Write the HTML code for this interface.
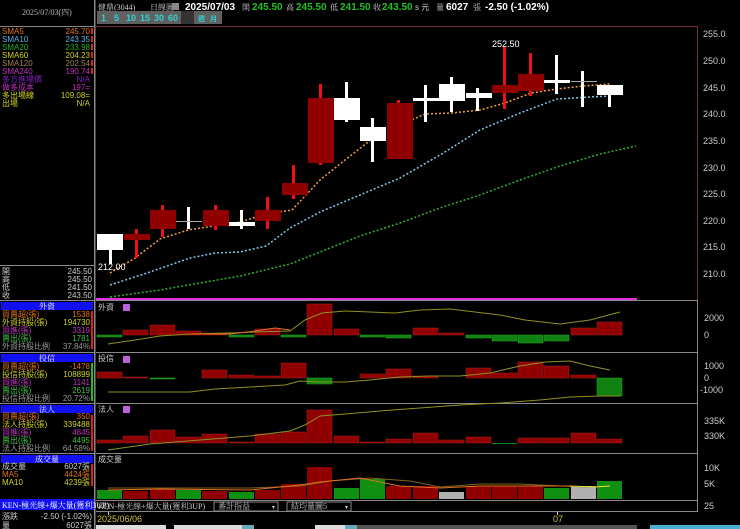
<!DOCTYPE html>
<html><head><meta charset="utf-8"><style>
html,body{margin:0;padding:0;background:#000;width:740px;height:529px;overflow:hidden}
svg{display:block}
text{font-family:"Liberation Sans","Noto Sans CJK TC",sans-serif}
.c{font-family:"Liberation Serif","Noto Serif CJK SC",serif;font-size:8px}
</style></head><body>
<svg width="740" height="529" viewBox="0 0 740 529" xmlns="http://www.w3.org/2000/svg">
<!-- left panel -->
<rect x="0" y="0" width="94" height="529" fill="#000"/>
<line x1="94.5" y1="0" x2="94.5" y2="529" stroke="#888"/>
<line x1="95.5" y1="0" x2="95.5" y2="529" stroke="#444"/>
<text x="22" y="15" class="c" fill="#bbb">2025/07/03(四)</text>
<line x1="0" y1="26.5" x2="94" y2="26.5" stroke="#888"/>
<g class="c">
<text x="2" y="34" fill="#e07020">SMA5</text><text x="90" y="34" fill="#e07020" text-anchor="end">245.70</text>
<text x="2" y="42" fill="#5ab0e0">SMA10</text><text x="90" y="42" fill="#5ab0e0" text-anchor="end">243.35</text>
<text x="2" y="50" fill="#20b020">SMA20</text><text x="90" y="50" fill="#20b020" text-anchor="end">233.98</text>
<text x="2" y="58" fill="#d0d020">SMA60</text><text x="90" y="58" fill="#d0d020" text-anchor="end">204.23</text>
<text x="2" y="66" fill="#a08050">SMA120</text><text x="90" y="66" fill="#a08050" text-anchor="end">202.54</text>
<text x="2" y="74" fill="#c030c0">SMA240</text><text x="90" y="74" fill="#c030c0" text-anchor="end">190.74</text>
<text x="2" y="82" fill="#8020c0">多方進場價</text><text x="90" y="82" fill="#8020c0" text-anchor="end">N/A</text>
<text x="2" y="90" fill="#c030c0">做多成本</text><text x="90" y="90" fill="#c030c0" text-anchor="end">197=</text>
<text x="2" y="98" fill="#d0d020">多出場線</text><text x="90" y="98" fill="#d0d020" text-anchor="end">109.08=</text>
<text x="2" y="106" fill="#d0d020">出場</text><text x="90" y="106" fill="#d0d020" text-anchor="end">N/A</text>
</g>
<g fill="#e02020"><rect x="91" y="28" width="2" height="6"/><rect x="91" y="36" width="2" height="6"/><rect x="91" y="44" width="2" height="6"/><rect x="91" y="52" width="2" height="6"/><rect x="91" y="60" width="2" height="6"/><rect x="91" y="68" width="2" height="6"/></g>
<line x1="0" y1="265.5" x2="94" y2="265.5" stroke="#888"/>
<g class="c" fill="#ccc">
<text x="2" y="274">開</text><text x="92" y="274" text-anchor="end">245.50</text>
<text x="2" y="282">高</text><text x="92" y="282" text-anchor="end">245.50</text>
<text x="2" y="290">低</text><text x="92" y="290" text-anchor="end">241.50</text>
<text x="2" y="298">收</text><text x="92" y="298" text-anchor="end">243.50</text>
</g>
<!-- section 外資 -->
<line x1="0" y1="300.5" x2="94" y2="300.5" stroke="#888"/>
<rect x="1" y="302" width="92" height="8" fill="#1010f0"/><text x="47" y="309" class="c" fill="#fff" text-anchor="middle">外資</text>
<g class="c">
<text x="2" y="317" fill="#e07020">買賣超(張)</text><text x="90" y="317" fill="#e07020" text-anchor="end">1538</text>
<text x="2" y="325" fill="#d0d020">外資持股(張)</text><text x="90" y="325" fill="#d0d020" text-anchor="end">194730</text>
<text x="2" y="333" fill="#c030c0">買進(張)</text><text x="90" y="333" fill="#c030c0" text-anchor="end">3319</text>
<text x="2" y="341" fill="#40c040">賣出(張)</text><text x="90" y="341" fill="#40c040" text-anchor="end">1781</text>
<text x="2" y="349" fill="#999">外資持股比例</text><text x="90" y="349" fill="#999" text-anchor="end">37.84%</text>
</g>
<line x1="0" y1="352.5" x2="94" y2="352.5" stroke="#888"/>
<rect x="1" y="354" width="92" height="8" fill="#1010f0"/><text x="47" y="361" class="c" fill="#fff" text-anchor="middle">投信</text>
<g class="c">
<text x="2" y="369" fill="#e07020">買賣超(張)</text><text x="90" y="369" fill="#e07020" text-anchor="end">-1478</text>
<text x="2" y="377" fill="#d0d020">投信持股(張)</text><text x="90" y="377" fill="#d0d020" text-anchor="end">108899</text>
<text x="2" y="385" fill="#c030c0">買進(張)</text><text x="90" y="385" fill="#c030c0" text-anchor="end">1141</text>
<text x="2" y="393" fill="#40c040">賣出(張)</text><text x="90" y="393" fill="#40c040" text-anchor="end">2619</text>
<text x="2" y="401" fill="#999">投信持股比例</text><text x="90" y="401" fill="#999" text-anchor="end">20.72%</text>
</g>
<line x1="0" y1="403.5" x2="94" y2="403.5" stroke="#888"/>
<rect x="1" y="405" width="92" height="8" fill="#1010f0"/><text x="47" y="412" class="c" fill="#fff" text-anchor="middle">法人</text>
<g class="c">
<text x="2" y="419" fill="#e07020">買賣超(張)</text><text x="90" y="419" fill="#e07020" text-anchor="end">350</text>
<text x="2" y="427" fill="#d0d020">法人持股(張)</text><text x="90" y="427" fill="#d0d020" text-anchor="end">339488</text>
<text x="2" y="435" fill="#c030c0">買進(張)</text><text x="90" y="435" fill="#c030c0" text-anchor="end">4845</text>
<text x="2" y="443" fill="#40c040">賣出(張)</text><text x="90" y="443" fill="#40c040" text-anchor="end">4495</text>
<text x="2" y="451" fill="#999">法人持股比例</text><text x="90" y="451" fill="#999" text-anchor="end">64.58%</text>
</g>
<line x1="0" y1="453.5" x2="94" y2="453.5" stroke="#888"/>
<rect x="1" y="455" width="92" height="8" fill="#1010f0"/><text x="47" y="462" class="c" fill="#fff" text-anchor="middle">成交量</text>
<g class="c">
<text x="2" y="469" fill="#ccc">成交量</text><text x="90" y="469" fill="#ccc" text-anchor="end">6027張</text>
<text x="2" y="477" fill="#e07020">MA5</text><text x="90" y="477" fill="#e07020" text-anchor="end">4424張</text>
<text x="2" y="485" fill="#d0d020">MA10</text><text x="90" y="485" fill="#d0d020" text-anchor="end">4239張</text>
</g>
<g fill="#e02020"><rect x="91" y="311" width="2" height="38"/><rect x="91" y="415" width="2" height="36"/><rect x="91" y="464" width="2" height="22"/></g>
<g fill="#20c020"><rect x="91" y="363" width="2" height="38"/></g>
<rect x="0" y="499" width="94" height="11" fill="#1010f0"/><text x="2" y="508" class="c" fill="#fff">KEN-極光線+爆大量(獲利3UP)</text>
<g class="c" fill="#ccc"><text x="2" y="519">漲跌</text><text x="92" y="519" text-anchor="end">-2.50 (-1.02%)</text>
<text x="2" y="528">量</text><text x="92" y="528" text-anchor="end">6027張</text></g>

<!-- top header -->
<text x="98" y="10" class="c" fill="#ccc">健鼎(3044)</text>
<text x="150" y="10" class="c" fill="#ccc">日線圖</text>
<rect x="172" y="3" width="7" height="7" fill="#888"/>
<text x="185" y="10" font-size="10" font-weight="bold" fill="#fff">2025/07/03</text>
<text x="242" y="10" class="c" fill="#ccc">開</text><text x="252" y="10" font-size="10" font-weight="bold" fill="#20c020">245.50</text>
<text x="286" y="10" class="c" fill="#ccc">高</text><text x="296" y="10" font-size="10" font-weight="bold" fill="#20c020">245.50</text>
<text x="330" y="10" class="c" fill="#ccc">低</text><text x="340" y="10" font-size="10" font-weight="bold" fill="#20c020">241.50</text>
<text x="373" y="10" class="c" fill="#ccc">收</text><text x="382" y="10" font-size="10" font-weight="bold" fill="#20c020">243.50</text>
<text x="415" y="10" font-size="8" fill="#ccc">s 元</text>
<text x="436" y="10" class="c" fill="#ccc">量</text><text x="446" y="10" font-size="10" font-weight="bold" fill="#fff">6027</text>
<text x="473" y="10" class="c" fill="#ccc">張</text>
<text x="485" y="10" font-size="10" font-weight="bold" fill="#fff">-2.50 (-1.02%)</text>
<!-- period buttons -->
<g font-size="9" font-weight="bold" fill="#30d0d0">
<rect x="97" y="11" width="125" height="13" fill="#606060"/>
<rect x="181" y="11" width="13" height="13" fill="#333"/>
<text x="101" y="21">1</text><text x="114" y="21">5</text><text x="126" y="21">10</text><text x="140" y="21">15</text><text x="154" y="21">30</text><text x="168" y="21">60</text>
<text x="198" y="21" font-size="7">週</text><text x="210" y="21" font-size="7">月</text>
</g>
<line x1="96" y1="26.5" x2="697" y2="26.5" stroke="#703040"/>
<line x1="697.5" y1="26" x2="697.5" y2="300" stroke="#703040"/>
<!-- price axis -->
<g font-size="9" fill="#ccc">
<text x="703" y="37">255.0</text><text x="703" y="64">250.0</text><text x="703" y="91">245.0</text><text x="703" y="117">240.0</text><text x="703" y="144">235.0</text><text x="703" y="171">230.0</text><text x="703" y="197">225.0</text><text x="703" y="224">220.0</text><text x="703" y="250">215.0</text><text x="703" y="277">210.0</text>
</g>
<!-- MAs -->
<polyline fill="none" stroke="#30b030" stroke-width="1.5" stroke-dasharray="2,2" points="110,297 160,290 200,283 240,276 290,264 320,252 360,236 400,223 440,208 480,195 520,180 560,166 600,154 636,146"/>
<polyline fill="none" stroke="#80c8e8" stroke-width="1.5" stroke-dasharray="2,2" points="110,285 150,272 190,258 215,253 240,252 266,246 290,228 320,212 360,195 400,178 440,155 480,130 520,113 557,99 590,97 610,96"/>
<polyline fill="none" stroke="#f0a040" stroke-width="1.5" stroke-dasharray="2,2" points="110,273 135,258 160,239 188,230 214,226 240,222 266,214 292,210 320,180 345,160 372,139 398,126 425,114 452,113 480,110 505,103 531,93 557,89 583,86 610,84"/>
<!-- candles -->
<g>
<rect x="109" y="234" width="3" height="30" fill="#fff"/><rect x="97" y="234" width="26" height="16" fill="#fff"/>
<rect x="135" y="229" width="3" height="29" fill="#f01010"/><rect x="124" y="234" width="26" height="6" fill="#900000"/>
<rect x="161" y="205" width="3" height="32" fill="#f01010"/><rect x="150" y="210" width="26" height="19" fill="#900000"/>
<rect x="187" y="207" width="3" height="22" fill="#fff"/><rect x="176" y="221" width="26" height="1" fill="#aaa"/>
<rect x="214" y="205" width="3" height="25" fill="#f01010"/><rect x="203" y="210" width="26" height="16" fill="#900000"/>
<rect x="240" y="210" width="3" height="19" fill="#fff"/><rect x="229" y="222" width="26" height="4" fill="#fff"/>
<rect x="266" y="197" width="3" height="32" fill="#f01010"/><rect x="255" y="210" width="26" height="11" fill="#900000"/>
<rect x="292" y="165" width="3" height="34" fill="#f01010"/><rect x="282" y="183" width="26" height="12" fill="#900000"/>
<rect x="319" y="84" width="3" height="81" fill="#f01010"/><rect x="308" y="98" width="26" height="65" fill="#900000"/>
<rect x="345" y="82" width="3" height="40" fill="#fff"/><rect x="334" y="98" width="26" height="22" fill="#fff"/>
<rect x="371" y="118" width="3" height="44" fill="#fff"/><rect x="360" y="127" width="26" height="14" fill="#fff"/>
<rect x="397" y="100" width="3" height="59" fill="#f01010"/><rect x="387" y="103" width="26" height="56" fill="#900000"/>
<rect x="424" y="85" width="3" height="37" fill="#fff"/><rect x="413" y="98" width="26" height="3" fill="#fff"/>
<rect x="450" y="77" width="3" height="35" fill="#fff"/><rect x="439" y="84" width="26" height="17" fill="#fff"/>
<rect x="476" y="88" width="3" height="23" fill="#fff"/><rect x="466" y="93" width="26" height="5" fill="#fff"/>
<rect x="503" y="47" width="3" height="62" fill="#f01010"/><rect x="492" y="85" width="26" height="8" fill="#900000"/>
<rect x="529" y="53" width="3" height="43" fill="#f01010"/><rect x="518" y="74" width="26" height="17" fill="#900000"/>
<rect x="555" y="55" width="3" height="39" fill="#fff"/><rect x="544" y="80" width="26" height="3" fill="#fff"/>
<rect x="581" y="71" width="3" height="36" fill="#fff"/><rect x="571" y="81" width="26" height="1" fill="#aaa"/>
<rect x="608" y="85" width="3" height="22" fill="#fff"/><rect x="597" y="85" width="26" height="10" fill="#fff"/>
</g>
<text x="492" y="47" font-size="9" fill="#fff">252.50</text>
<text x="98" y="270" font-size="9" fill="#fff">212.00</text>
<line x1="96" y1="299" x2="637" y2="299" stroke="#e030e0" stroke-width="2"/>
<line x1="96" y1="300.5" x2="697" y2="300.5" stroke="#888"/>

<!-- sub panels borders -->
<g stroke="#888" fill="none">
<line x1="96" y1="352.5" x2="697" y2="352.5"/><line x1="96" y1="403.5" x2="697" y2="403.5"/><line x1="96" y1="453.5" x2="697" y2="453.5"/>
<line x1="96" y1="500.5" x2="697" y2="500.5"/><line x1="96" y1="511.5" x2="697" y2="511.5"/>
<line x1="697.5" y1="300" x2="697.5" y2="512"/>
</g>
<g class="c" fill="#ccc"><text x="98" y="310">外資</text><text x="98" y="361">投信</text><text x="98" y="412">法人</text><text x="98" y="462">成交量</text></g>
<g fill="#c060e0"><rect x="123" y="304" width="7" height="7"/><rect x="123" y="356" width="7" height="7"/><rect x="123" y="406" width="7" height="7"/></g>
<g font-size="9" fill="#ccc">
<text x="704" y="321">2000</text><text x="704" y="338">0</text>
<text x="704" y="369">1000</text><text x="704" y="381">0</text><text x="700" y="393">-1000</text>
<text x="704" y="424">335K</text><text x="704" y="439">330K</text>
<text x="704" y="471">10K</text><text x="704" y="487">5K</text><text x="704" y="509">25</text>
</g>

<!-- 外資 bars -->
<g fill="#900000" stroke="#b02020" stroke-width="0.5">
<rect x="123" y="330" width="25" height="5"/><rect x="150" y="325" width="25" height="10"/><rect x="176" y="331" width="25" height="4"/><rect x="202" y="333" width="25" height="2"/>
<rect x="255" y="329" width="25" height="6"/><rect x="307" y="304" width="25" height="31"/><rect x="334" y="329" width="25" height="6"/>
<rect x="413" y="328" width="25" height="7"/><rect x="439" y="333" width="25" height="2"/><rect x="571" y="328" width="25" height="7"/><rect x="597" y="322" width="25" height="13"/>
</g>
<g fill="#108010" stroke="#20b020" stroke-width="0.5">
<rect x="97" y="335" width="25" height="2"/><rect x="229" y="335" width="25" height="2"/><rect x="281" y="335" width="25" height="2"/>
<rect x="360" y="335" width="25" height="2"/><rect x="386" y="335" width="25" height="3"/><rect x="466" y="335" width="25" height="3"/><rect x="492" y="335" width="25" height="6"/><rect x="518" y="335" width="25" height="8"/><rect x="544" y="335" width="25" height="6"/>
</g>
<polyline fill="none" stroke="#909020" points="108,344 135,340 160,336 190,334 230,333 255,332 290,331 305,320 322,313 345,311 370,312 395,313 420,310 450,309 475,312 500,315 525,320 560,324 590,320 620,312"/>
<polyline fill="none" stroke="#e07020" points="190,334 230,334 255,331 275,328 290,330"/>
<!-- 投信 bars -->
<g fill="#900000" stroke="#b02020" stroke-width="0.5">
<rect x="97" y="372" width="25" height="6"/><rect x="123" y="377" width="25" height="1"/><rect x="202" y="370" width="25" height="8"/><rect x="229" y="375" width="25" height="3"/><rect x="255" y="376" width="25" height="2"/><rect x="281" y="363" width="25" height="15"/>
<rect x="360" y="374" width="25" height="4"/><rect x="386" y="369" width="25" height="9"/><rect x="413" y="376" width="25" height="2"/><rect x="466" y="368" width="25" height="10"/><rect x="492" y="373" width="25" height="5"/><rect x="518" y="362" width="25" height="16"/><rect x="544" y="366" width="25" height="12"/><rect x="571" y="375" width="25" height="3"/>
</g>
<g fill="#108010" stroke="#20b020" stroke-width="0.5">
<rect x="307" y="378" width="25" height="6"/><rect x="597" y="378" width="25" height="18"/><rect x="150" y="378" width="25" height="1"/>
</g>
<polyline fill="none" stroke="#909020" points="108,392 150,392 190,392 215,389 250,387 285,385 300,381 320,382 345,382 370,380 400,377 430,376 460,376 490,373 520,366 545,362 570,361 590,366 610,370"/>
<!-- 法人 bars -->
<g fill="#900000" stroke="#b02020" stroke-width="0.5">
<rect x="97" y="440" width="25" height="3"/><rect x="123" y="436" width="25" height="7"/><rect x="150" y="430" width="25" height="13"/><rect x="176" y="437" width="25" height="6"/><rect x="202" y="434" width="25" height="9"/><rect x="229" y="442" width="25" height="1"/>
<rect x="255" y="434" width="25" height="9"/><rect x="281" y="432" width="25" height="11"/><rect x="307" y="410" width="25" height="33"/><rect x="334" y="436" width="25" height="7"/><rect x="360" y="442" width="25" height="1"/><rect x="386" y="439" width="25" height="4"/><rect x="413" y="433" width="25" height="10"/><rect x="439" y="440" width="25" height="3"/><rect x="466" y="437" width="25" height="6"/>
<rect x="518" y="438" width="25" height="5"/><rect x="544" y="438" width="25" height="5"/><rect x="571" y="433" width="25" height="10"/><rect x="597" y="439" width="25" height="4"/>
</g>
<rect x="492" y="443" width="25" height="1" fill="#108010"/>
<polyline fill="none" stroke="#909020" points="108,450 150,444 200,440 250,436 290,431 305,425 320,416 345,414 380,411 420,408 460,405 500,403 540,400 570,397 600,396 620,396"/>
<!-- volume bars -->
<g stroke-width="0.5">
<rect x="97" y="490" width="25" height="9" fill="#109010"/>
<rect x="123" y="491" width="25" height="8" fill="#900000"/>
<rect x="150" y="489" width="25" height="10" fill="#900000"/>
<rect x="176" y="490" width="25" height="9" fill="#109010"/>
<rect x="202" y="491" width="25" height="8" fill="#900000"/>
<rect x="229" y="492" width="25" height="7" fill="#109010"/>
<rect x="255" y="490" width="25" height="9" fill="#900000"/>
<rect x="281" y="484" width="25" height="15" fill="#900000"/>
<rect x="307" y="467" width="25" height="32" fill="#900000"/>
<rect x="334" y="488" width="25" height="11" fill="#109010"/>
<rect x="360" y="479" width="25" height="20" fill="#109010"/>
<rect x="386" y="486" width="25" height="13" fill="#900000"/>
<rect x="413" y="486" width="25" height="13" fill="#900000"/>
<rect x="439" y="492" width="25" height="7" fill="#b0b0b0"/>
<rect x="466" y="486" width="25" height="13" fill="#900000"/>
<rect x="492" y="486" width="25" height="13" fill="#900000"/>
<rect x="518" y="486" width="25" height="13" fill="#900000"/>
<rect x="544" y="488" width="25" height="11" fill="#109010"/>
<rect x="571" y="486" width="25" height="13" fill="#b0b0b0"/>
<rect x="597" y="481" width="25" height="18" fill="#109010"/>
</g>
<polyline fill="none" stroke="#806020" points="108,488 180,488 250,488 300,486 330,481 370,478 410,481 440,487 480,484 520,484 560,486 590,487 610,486"/>
<polyline fill="none" stroke="#e07020" points="108,490 160,489 250,490 300,485 320,482 360,478 400,486 440,488 480,486 540,486 570,486"/>
<polyline fill="none" stroke="#e0e040" points="570,486 595,487 610,486"/>
<!-- selector row -->
<text x="98" y="509" class="c" fill="#ccc">KEN-極光線+爆大量(獲利3UP)</text>
<rect x="214" y="502" width="64" height="9" fill="none" stroke="#888"/><text x="218" y="509" class="c" fill="#ccc">番計指益</text><text x="272" y="509" font-size="6" fill="#ccc">▾</text>
<rect x="287" y="502" width="64" height="9" fill="none" stroke="#888"/><text x="291" y="509" class="c" fill="#ccc">結均量圖5</text><text x="345" y="509" font-size="6" fill="#ccc">▾</text>
<line x1="108.5" y1="512" x2="108.5" y2="515" stroke="#ccc"/><line x1="557.5" y1="512" x2="557.5" y2="515" stroke="#ccc"/>
<text x="97" y="522" font-size="9" fill="#d0c040">2025/06/06</text>
<text x="553" y="522" font-size="9" fill="#d0c040">07</text>
<rect x="96" y="525" width="70" height="4" fill="#ddd"/><rect x="174" y="525" width="68" height="4" fill="#ddd"/><rect x="242" y="525" width="12" height="4" fill="#6ab"/>
<rect x="315" y="525" width="30" height="4" fill="#ddd"/><rect x="345" y="525" width="12" height="4" fill="#6ab"/><rect x="357" y="525" width="280" height="4" fill="#555"/><rect x="650" y="525" width="90" height="4" fill="#4ab0d0"/>
</svg>
</body></html>
